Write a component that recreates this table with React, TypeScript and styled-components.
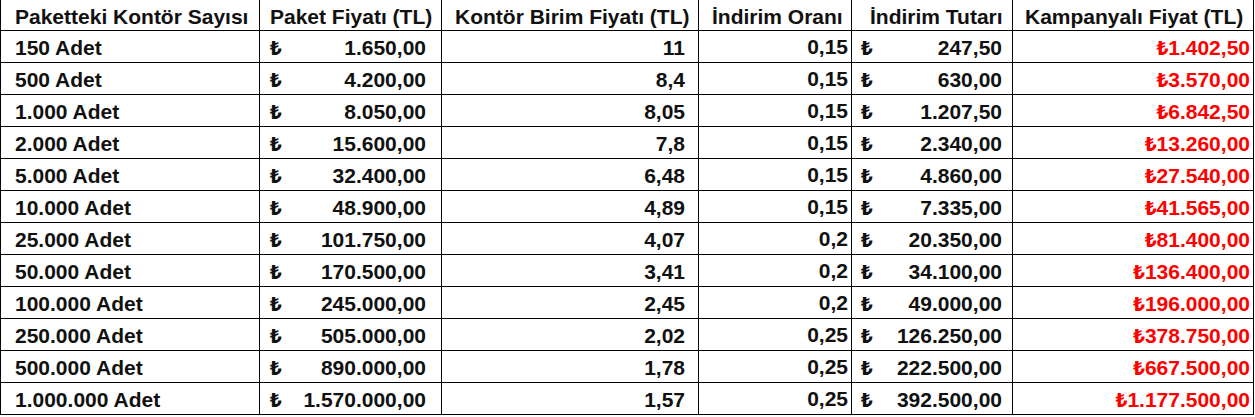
import React from "react";
import styled, { createGlobalStyle } from "styled-components";

const Global = createGlobalStyle`
  html, body { margin: 0; padding: 0; background: #ffffff; }
  body { font-family: "Liberation Sans", Arial, "DejaVu Sans", sans-serif; }
`;

const Grid = styled.div`
  display: grid;
  grid-template-columns: 260px 182px 257px 153px 161px 241px;
  grid-template-rows: 31px repeat(12, 32px);
  width: 1254px;
  color: #111111;
  font-size: 21px;
  font-weight: 700;
`;

const Cell = styled.div<{ $first?: boolean }>`
  box-sizing: border-box;
  border-right: 1px solid #000;
  border-bottom: 1px solid #000;
  border-left: ${(p) => (p.$first ? "1px solid #000" : "none")};
  display: flex;
  align-items: center;
  white-space: nowrap;
  overflow: hidden;
  line-height: 1;
`;

const HeadCell = styled(Cell)<{ $pl: number }>`
  padding-left: ${(p) => p.$pl}px;
  padding-top: 2px;
`;

const LabelCell = styled(Cell)`
  padding-left: 14px;
  padding-top: 2px;
`;

const MoneyCell = styled(Cell)<{ $pr: number; $pl: number }>`
  justify-content: space-between;
  padding-left: ${(p) => p.$pl}px;
  padding-right: ${(p) => p.$pr}px;
  padding-top: 2px;
`;

const Lira = styled.span`
  font-family: "Noto Sans", "DejaVu Sans", sans-serif;
  font-size: 20px;
  font-weight: 800;
`;

const RightCell = styled(Cell)<{ $pr: number; $bottom?: boolean }>`
  justify-content: flex-end;
  align-items: ${(p) => (p.$bottom ? "flex-end" : "center")};
  padding-right: ${(p) => p.$pr}px;
  padding-bottom: ${(p) => (p.$bottom ? "5px" : "0")};
  padding-top: ${(p) => (p.$bottom ? "0" : "2px")};
`;

const RedCell = styled(RightCell)`
  color: #ff0000;
`;

type Row = [string, string, string, string, string, string];

const rows: Row[] = [
  ["150 Adet", "1.650,00", "11", "0,15", "247,50", "1.402,50"],
  ["500 Adet", "4.200,00", "8,4", "0,15", "630,00", "3.570,00"],
  ["1.000 Adet", "8.050,00", "8,05", "0,15", "1.207,50", "6.842,50"],
  ["2.000 Adet", "15.600,00", "7,8", "0,15", "2.340,00", "13.260,00"],
  ["5.000 Adet", "32.400,00", "6,48", "0,15", "4.860,00", "27.540,00"],
  ["10.000 Adet", "48.900,00", "4,89", "0,15", "7.335,00", "41.565,00"],
  ["25.000 Adet", "101.750,00", "4,07", "0,2", "20.350,00", "81.400,00"],
  ["50.000 Adet", "170.500,00", "3,41", "0,2", "34.100,00", "136.400,00"],
  ["100.000 Adet", "245.000,00", "2,45", "0,2", "49.000,00", "196.000,00"],
  ["250.000 Adet", "505.000,00", "2,02", "0,25", "126.250,00", "378.750,00"],
  ["500.000 Adet", "890.000,00", "1,78", "0,25", "222.500,00", "667.500,00"],
  ["1.000.000 Adet", "1.570.000,00", "1,57", "0,25", "392.500,00", "1.177.500,00"],
];

export default function App() {
  return (
    <>
      <Global />
      <Grid>
        <HeadCell $first $pl={14}>Paketteki Kontör Sayısı</HeadCell>
        <HeadCell $pl={10}>Paket Fiyatı (TL)</HeadCell>
        <HeadCell $pl={13}>Kontör Birim Fiyatı (TL)</HeadCell>
        <HeadCell $pl={13}>İndirim Oranı</HeadCell>
        <HeadCell $pl={18}>İndirim Tutarı</HeadCell>
        <HeadCell $pl={12}>Kampanyalı Fiyat (TL)</HeadCell>
        {rows.map((r) => (
          <React.Fragment key={r[0]}>
            <LabelCell $first>{r[0]}</LabelCell>
            <MoneyCell $pl={10} $pr={15}>
              <Lira>₺</Lira>
              <span>{r[1]}</span>
            </MoneyCell>
            <RightCell $pr={13}>{r[2]}</RightCell>
            <RightCell $pr={3} $bottom>{r[3]}</RightCell>
            <MoneyCell $pl={9} $pr={10}>
              <Lira>₺</Lira>
              <span>{r[4]}</span>
            </MoneyCell>
            <RedCell $pr={3}>
              <Lira>₺</Lira>
              <span>{r[5]}</span>
            </RedCell>
          </React.Fragment>
        ))}
      </Grid>
    </>
  );
}
